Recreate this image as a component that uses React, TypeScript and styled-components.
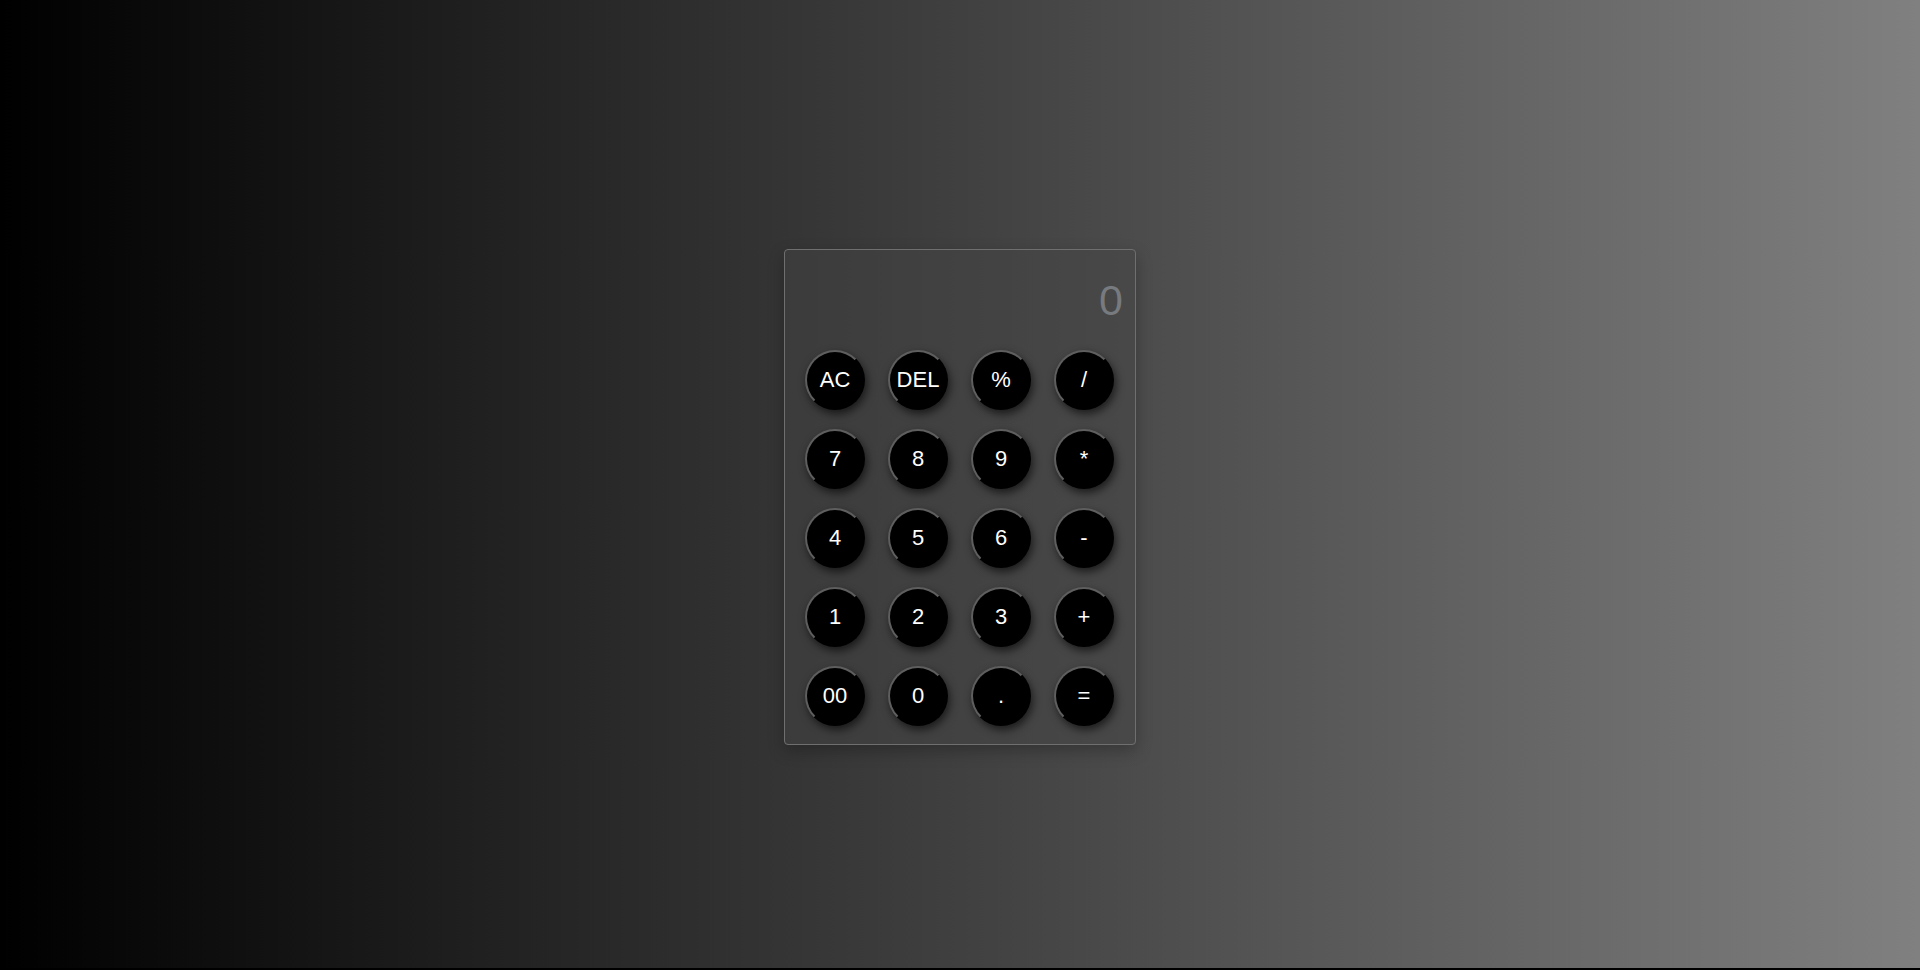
import React, { useState } from 'react';
import styled, { createGlobalStyle } from 'styled-components';

// ─────────────────────────────────────────────────────────────────
// Global
// ─────────────────────────────────────────────────────────────────

const GlobalStyle = createGlobalStyle`
  html {
    background: #000;
  }
  body {
    margin: 0;
    font-family: "Liberation Sans", Arial, sans-serif;
  }
`;

// ─────────────────────────────────────────────────────────────────
// Styled Components
// ─────────────────────────────────────────────────────────────────

const Page = styled.div`
  height: 968px;
  box-sizing: border-box;
  padding-top: 249px;
  display: flex;
  justify-content: center;
  align-items: flex-start;
  background: linear-gradient(to right, #000000, #808080);
`;

const Calculator = styled.div`
  width: 352px;
  box-sizing: border-box;
  padding: 20px 21px 18px 20px;
  border: 1px solid #6f6f6f;
  border-radius: 4px;
  background: rgba(68, 68, 68, 0.45);
  box-shadow: 0 6px 16px rgba(0, 0, 0, 0.25);
  display: flex;
  flex-direction: column;
  gap: 20px;
`;

const Display = styled.div`
  height: 60px;
  line-height: 60px;
  margin-right: -9px;
  text-align: right;
  font-size: 43px;
  color: #777a7e;
  overflow: hidden;
  white-space: nowrap;
`;

const Keypad = styled.div`
  display: grid;
  grid-template-columns: repeat(4, 60px);
  column-gap: 23px;
  row-gap: 19px;
`;

const Key = styled.button`
  width: 60px;
  height: 60px;
  padding: 0;
  border-radius: 50%;
  border: 2px solid #000;
  border-top-color: #5e5e5e;
  border-left-color: #5e5e5e;
  background: #000;
  color: #fff;
  font-family: "Liberation Sans", Arial, sans-serif;
  font-size: 22px;
  cursor: pointer;
  box-shadow: 2px 4px 8px rgba(0, 0, 0, 0.6);
  outline: none;

  &:active {
    box-shadow: 1px 2px 4px rgba(0, 0, 0, 0.6);
  }
`;

// ─────────────────────────────────────────────────────────────────
// Component
// ─────────────────────────────────────────────────────────────────

const KEYS = [
  'AC', 'DEL', '%', '/',
  '7', '8', '9', '*',
  '4', '5', '6', '-',
  '1', '2', '3', '+',
  '00', '0', '.', '=',
];

const App: React.FC = () => {
  const [value, setValue] = useState('0');

  const handleKey = (key: string) => {
    if (key === 'AC') {
      setValue('0');
    } else if (key === 'DEL') {
      setValue((v) => (v.length > 1 ? v.slice(0, -1) : '0'));
    } else if (key === '=') {
      try {
        // eslint-disable-next-line no-new-func
        const result = Function(`return (${value})`)();
        setValue(String(result));
      } catch {
        setValue('Error');
      }
    } else {
      setValue((v) => (v === '0' || v === 'Error' ? key : v + key));
    }
  };

  return (
    <>
      <GlobalStyle />
      <Page>
        <Calculator>
          <Display>{value}</Display>
          <Keypad>
            {KEYS.map((k) => (
              <Key key={k} onClick={() => handleKey(k)}>
                {k}
              </Key>
            ))}
          </Keypad>
        </Calculator>
      </Page>
    </>
  );
};

export default App;
